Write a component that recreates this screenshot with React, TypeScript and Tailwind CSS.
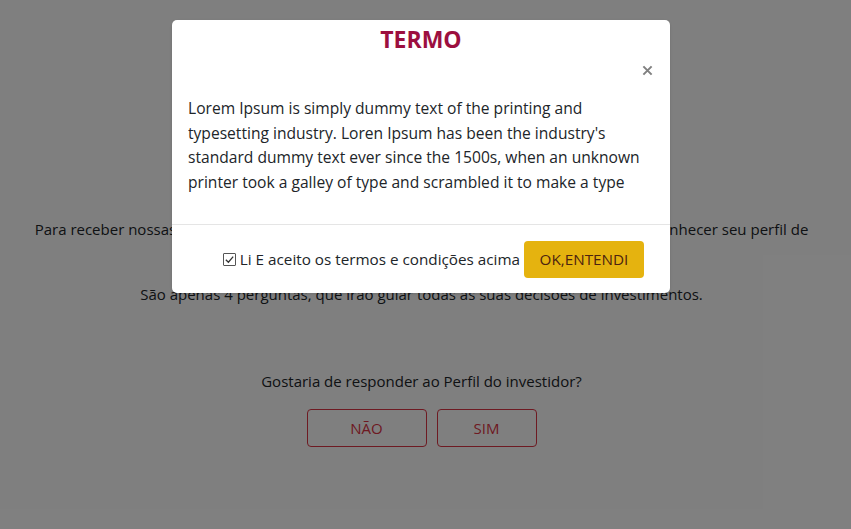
import React from "react";

export default function App() {
  const font = { fontFamily: '"Open Sans", "Noto Sans", sans-serif' };
  return (
    <div className="relative w-full h-[529px] overflow-hidden bg-white" style={font}>
      {/* background page */}
      <div className="flex flex-col items-center pt-[217px] pl-[26px] pr-[34px] text-center text-[15px] leading-[24px] text-[#212529]">
        <p className="whitespace-nowrap">
          Para receber nossas recomendações de investimentos mais personalizadas, precisamos conhecer seu perfil de
        </p>
        <p className="whitespace-nowrap">investidor.</p>
        <p className="mt-[17px]">São apenas 4 perguntas, que irão guiar todas as suas decisões de investimentos.</p>
        <p className="mt-[63px]">Gostaria de responder ao Perfil do investidor?</p>
        <div className="mt-[16px] flex gap-[10px]">
          <button className="w-[120px] h-[38px] rounded-[4px] border border-[#dc3545] text-[#dc3545] text-[15px]">
            NÃO
          </button>
          <button className="w-[100px] h-[38px] rounded-[4px] border border-[#dc3545] text-[#dc3545] text-[15px]">
            SIM
          </button>
        </div>
      </div>

      {/* overlay */}
      <div className="absolute inset-0 bg-black/50" />

      {/* modal */}
      <div className="absolute left-[172px] top-[20px] w-[498px] rounded-[5px] bg-white shadow-sm">
        <div className="flex flex-col">
          <h2 className="text-center text-[23px] font-bold leading-[38px] text-[#9c0f3f]">TERMO</h2>
          <div className="flex justify-end pr-[17px] h-[26px] items-center">
            <svg viewBox="0 0 12 12" className="h-[11px] w-[11px] -mt-[1px]">
              <path d="M1.5 1.5 L10.5 10.5 M10.5 1.5 L1.5 10.5" stroke="#808080" strokeWidth="2.2" />
            </svg>
          </div>
        </div>
        <div className="h-[141px] px-[16px] pt-[12px] border-b border-[#e5e5e5]">
          <div className="h-[98px] overflow-hidden text-[15.6px] leading-[24.5px] text-[#212529]">
            Lorem Ipsum is simply dummy text of the printing and typesetting industry. Loren Ipsum has been the
            industry's standard dummy text ever since the 1500s, when an unknown printer took a galley of type and
            scrambled it to make a type
          </div>
        </div>
        <div className="flex items-center justify-end gap-[4px] px-[26px] pt-[16px] pb-[15px] text-[15.25px] text-[#212529]">
          <label className="flex items-center gap-[4px]">
            <span className="flex h-[13px] w-[13px] items-center justify-center border border-[#555] rounded-[1px]">
              <svg viewBox="0 0 12 12" className="h-[11px] w-[11px]">
                <path d="M2 6.2 L4.8 9 L10 2.8" fill="none" stroke="#333" strokeWidth="1.4" />
              </svg>
            </span>
            <span>Li E aceito os termos e condições acima</span>
          </label>
          <button className="h-[37px] w-[120px] rounded-[4px] bg-[#e5b30f] text-[15.25px] text-[#4d2410]">
            OK,ENTENDI
          </button>
        </div>
      </div>
    </div>
  );
}
